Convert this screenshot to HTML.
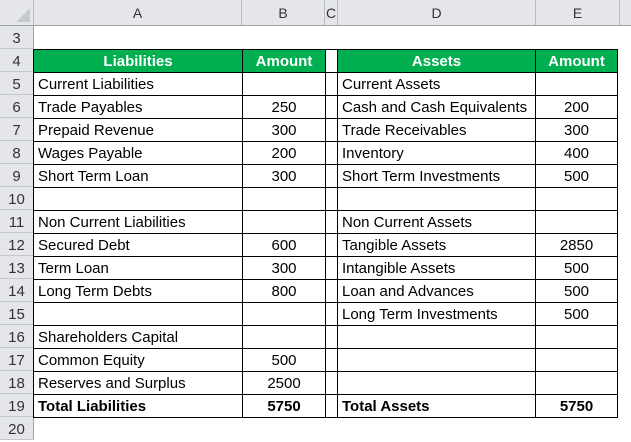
<!DOCTYPE html>
<html><head><meta charset="utf-8"><style>
body{margin:0;width:631px;height:440px;overflow:hidden;background:#fff;font-family:"Liberation Sans",Arial,sans-serif;}
.hdr{position:absolute;top:0;left:0;width:631px;height:26px;background:#e4e6ea;border-bottom:1px solid #9fa4ab;box-sizing:border-box;}
.hc{position:absolute;top:0;height:25px;line-height:26px;text-align:center;font-size:14px;color:#333;border-right:1px solid #b9bdc3;box-sizing:border-box;}
.rh{position:absolute;left:0;width:34px;height:23px;background:#e4e6ea;border-right:1px solid #9fa4ab;border-bottom:1px solid #c4c8cd;box-sizing:border-box;font-size:15px;color:#333;text-align:center;line-height:25px;}
table{position:absolute;left:33px;top:49px;border-collapse:collapse;table-layout:fixed;font-size:15px;}
td{height:21px;padding:1px 4px 0 4px;border:1px solid #000;white-space:nowrap;overflow:hidden;line-height:21px;}
td.n{text-align:center;}
td.c{padding:0;}
tr.g td.h{background:#00b050;color:#fff;font-weight:bold;text-align:center;}
tr.b td{font-weight:bold;}
</style></head><body>
<div class="hdr">
<div class="hc" style="left:0;width:34px;"><svg width="34" height="25"><polygon points="30,8 30,22 16,22" fill="#c6c9ce"/></svg></div>
<div class="hc" style="left:34px;width:208px;">A</div>
<div class="hc" style="left:242px;width:83px;">B</div>
<div class="hc" style="left:325px;width:13px;">C</div>
<div class="hc" style="left:338px;width:198px;">D</div>
<div class="hc" style="left:536px;width:84px;">E</div>
</div>
<div class="rh" style="top:26px">3</div>
<div class="rh" style="top:49px">4</div>
<div class="rh" style="top:72px">5</div>
<div class="rh" style="top:95px">6</div>
<div class="rh" style="top:118px">7</div>
<div class="rh" style="top:141px">8</div>
<div class="rh" style="top:164px">9</div>
<div class="rh" style="top:187px">10</div>
<div class="rh" style="top:210px">11</div>
<div class="rh" style="top:233px">12</div>
<div class="rh" style="top:256px">13</div>
<div class="rh" style="top:279px">14</div>
<div class="rh" style="top:302px">15</div>
<div class="rh" style="top:325px">16</div>
<div class="rh" style="top:348px">17</div>
<div class="rh" style="top:371px">18</div>
<div class="rh" style="top:394px">19</div>
<div class="rh" style="top:417px">20</div>
<table>
<colgroup><col style="width:209px"><col style="width:83px"><col style="width:12px"><col style="width:198px"><col style="width:82px"></colgroup>
<tr class="g"><td class="h">Liabilities</td><td class="h">Amount</td><td class="c"></td><td class="h">Assets</td><td class="h">Amount</td></tr>
<tr><td>Current Liabilities</td><td></td><td class="c"></td><td>Current Assets</td><td></td></tr>
<tr><td>Trade Payables</td><td class="n">250</td><td class="c"></td><td>Cash and Cash Equivalents</td><td class="n">200</td></tr>
<tr><td>Prepaid Revenue</td><td class="n">300</td><td class="c"></td><td>Trade Receivables</td><td class="n">300</td></tr>
<tr><td>Wages Payable</td><td class="n">200</td><td class="c"></td><td>Inventory</td><td class="n">400</td></tr>
<tr><td>Short Term Loan</td><td class="n">300</td><td class="c"></td><td>Short Term Investments</td><td class="n">500</td></tr>
<tr><td></td><td></td><td class="c"></td><td></td><td></td></tr>
<tr><td>Non Current Liabilities</td><td></td><td class="c"></td><td>Non Current Assets</td><td></td></tr>
<tr><td>Secured Debt</td><td class="n">600</td><td class="c"></td><td>Tangible Assets</td><td class="n">2850</td></tr>
<tr><td>Term Loan</td><td class="n">300</td><td class="c"></td><td>Intangible Assets</td><td class="n">500</td></tr>
<tr><td>Long Term Debts</td><td class="n">800</td><td class="c"></td><td>Loan and Advances</td><td class="n">500</td></tr>
<tr><td></td><td></td><td class="c"></td><td>Long Term Investments</td><td class="n">500</td></tr>
<tr><td>Shareholders Capital</td><td></td><td class="c"></td><td></td><td></td></tr>
<tr><td>Common Equity</td><td class="n">500</td><td class="c"></td><td></td><td></td></tr>
<tr><td>Reserves and Surplus</td><td class="n">2500</td><td class="c"></td><td></td><td></td></tr>
<tr class="b"><td>Total Liabilities</td><td class="n">5750</td><td class="c"></td><td>Total Assets</td><td class="n">5750</td></tr>
</table>
</body></html>
